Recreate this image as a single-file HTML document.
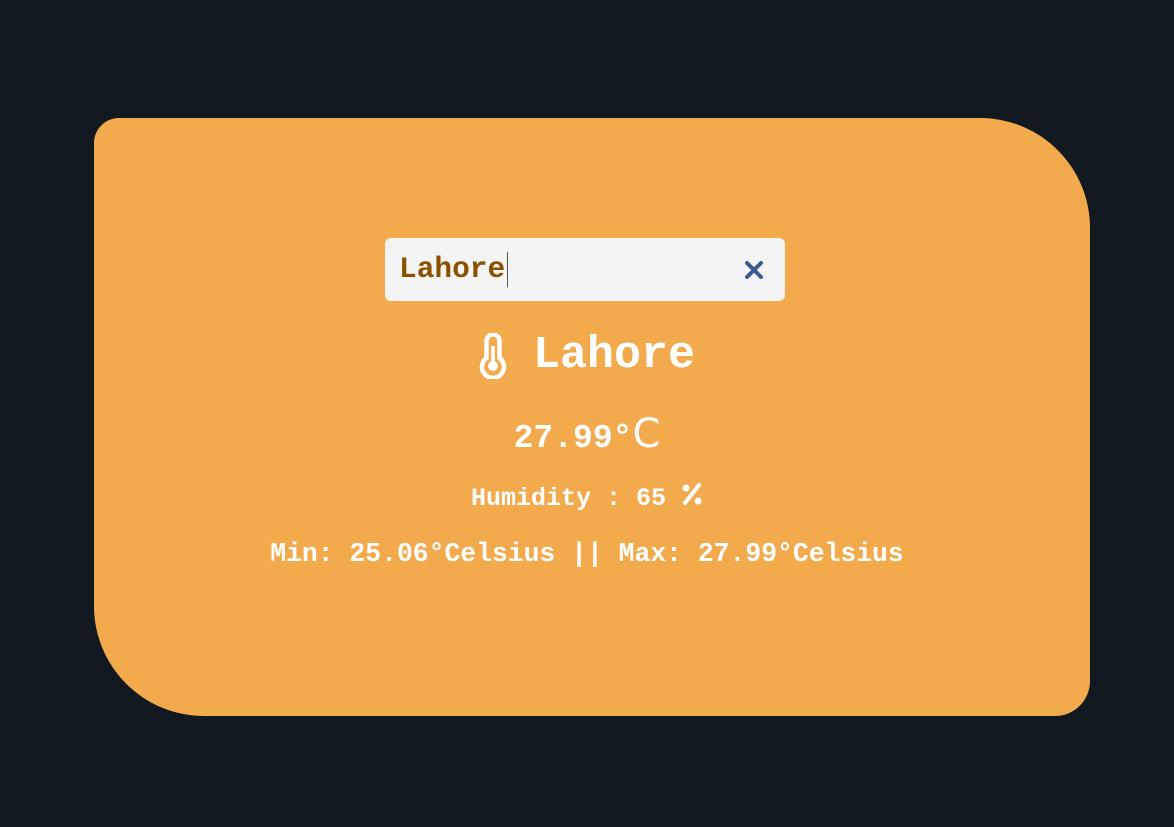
<!DOCTYPE html>
<html><head><style>
body{margin:0;width:1174px;height:827px;background:#111820;overflow:hidden;font-family:"Liberation Mono",monospace;font-weight:bold;}
.card{position:absolute;left:94px;top:118px;width:996px;height:598px;background:#f2aa4c;border-radius:25px 110px 35px 110px / 25px 110px 35px 110px;}
.inp{position:absolute;left:385px;top:238px;width:400px;height:63px;background:#f4f4f4;border-radius:6px;}
.inp span{position:absolute;left:14px;top:14px;font-size:29.5px;color:#8a5200;line-height:34px;}
.cur{position:absolute;left:122px;top:14px;width:1px;height:35px;background:#555;}
.c{position:absolute;left:0;width:1174px;text-align:center;color:#fff;white-space:pre;}
</style></head><body>
<div class="card"></div>
<div class="inp"><span>Lahore</span><div class="cur"></div>
<svg style="position:absolute;left:359px;top:22px" width="20" height="20" viewBox="0 0 20 20"><path d="M3 3L17 17M17 3L3 17" stroke="#3a5a94" stroke-width="4" stroke-linecap="round"/></svg></div>
<div class="c" style="top:333px;font-size:45px;line-height:46px;"><svg width="28" height="46" viewBox="0 0 28 46" style="vertical-align:top;margin-right:26px"><path d="M7.5 8a6.5 6.5 0 0 1 13 0v17a11 11 0 1 1-13 0z" fill="none" stroke="#fff" stroke-width="4.5"/><circle cx="14" cy="33" r="5" fill="#fff"/><path d="M14 13v20" stroke="#fff" stroke-width="3.5"/></svg>Lahore</div>
<div class="c" style="top:414px;font-size:33px;line-height:40px;">27.99°<span style="font-family:'DejaVu Sans',sans-serif;font-weight:normal;font-size:40px">C</span></div>
<div class="c" style="top:482px;font-size:25px;line-height:30px;">Humidity : 65 <svg width="22" height="24" viewBox="0 0 22 24" style="vertical-align:-1px"><path d="M18 3L4 21" stroke="#fff" stroke-width="4" stroke-linecap="round"/><circle cx="5" cy="6" r="3.5" fill="#fff"/><circle cx="17" cy="19" r="3.5" fill="#fff"/></svg></div>
<div class="c" style="top:539px;font-size:26.4px;line-height:30px;">Min: 25.06°Celsius || Max: 27.99°Celsius</div>
</body></html>
